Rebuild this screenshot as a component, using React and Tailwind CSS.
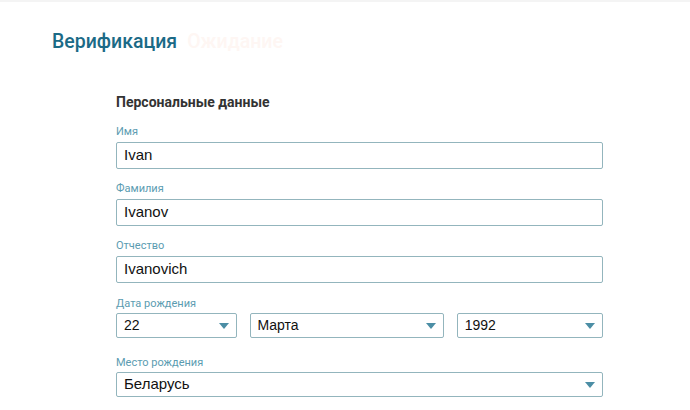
const Arrow = () => (
  <svg width="10" height="6" viewBox="0 0 10 6" className="shrink-0">
    <path d="M0 0h10L5 6z" fill="#4b8ea5" />
  </svg>
)

function Field({ label, value, mt }) {
  return (
    <div className={mt}>
      <div className="text-[11px] leading-[13px] text-[#5b9cb1]">{label}</div>
      <div className="mt-[4px] h-[27px] border border-[#93b5bd] rounded-[2px] px-[7px] flex items-center text-[15px] text-[#111]" style={{ fontFamily: '"Liberation Sans", Arial, sans-serif' }}>
        {value}
      </div>
    </div>
  )
}

function Select({ value, className }) {
  return (
    <div className={`h-[25px] border border-[#93b5bd] rounded-[2px] pl-[7px] pr-[7px] flex items-center justify-between text-[14px] text-[#111] ${className}`} style={{ fontFamily: '"Liberation Sans", Arial, sans-serif' }}>
      <span>{value}</span>
      <Arrow />
    </div>
  )
}

export default function App() {
  return (
    <div className="w-[690px] h-[410px] bg-white overflow-hidden" style={{ fontFamily: 'Roboto, "Noto Sans", sans-serif' }}>
      <div className="h-[2px] bg-[#f4f4f4]" />
      <div className="pl-[52px] pt-[28px] flex items-baseline gap-[10px]">
        <h1 className="text-[19.5px] leading-[24px] font-medium text-[#1b6a86]">Верификация</h1>
        <span className="text-[19.5px] leading-[24px] font-medium text-[#fef6f3]">Ожидание</span>
      </div>

      <div className="ml-[116px] w-[487px] mt-[40px]">
        <h2 className="text-[14px] leading-[16px] font-bold text-[#333]">Персональные данные</h2>
        <Field label="Имя" value="Ivan" mt="mt-[15px]" />
        <Field label="Фамилия" value="Ivanov" mt="mt-[13px]" />
        <Field label="Отчество" value="Ivanovich" mt="mt-[13px]" />

        <div className="mt-[14px]">
          <div className="text-[11px] leading-[13px] text-[#5b9cb1]">Дата рождения</div>
          <div className="mt-[3px] flex gap-[13px]">
            <Select value="22" className="w-[121px]" />
            <Select value="Марта" className="w-[195px]" />
            <Select value="1992" className="w-[147px]" />
          </div>
        </div>

        <div className="mt-[18px]">
          <div className="text-[11px] leading-[13px] text-[#5b9cb1]">Место рождения</div>
          <div className="mt-[3px]">
            <Select value="Беларусь" className="w-full text-[15px]" />
          </div>
        </div>
      </div>
    </div>
  )
}
